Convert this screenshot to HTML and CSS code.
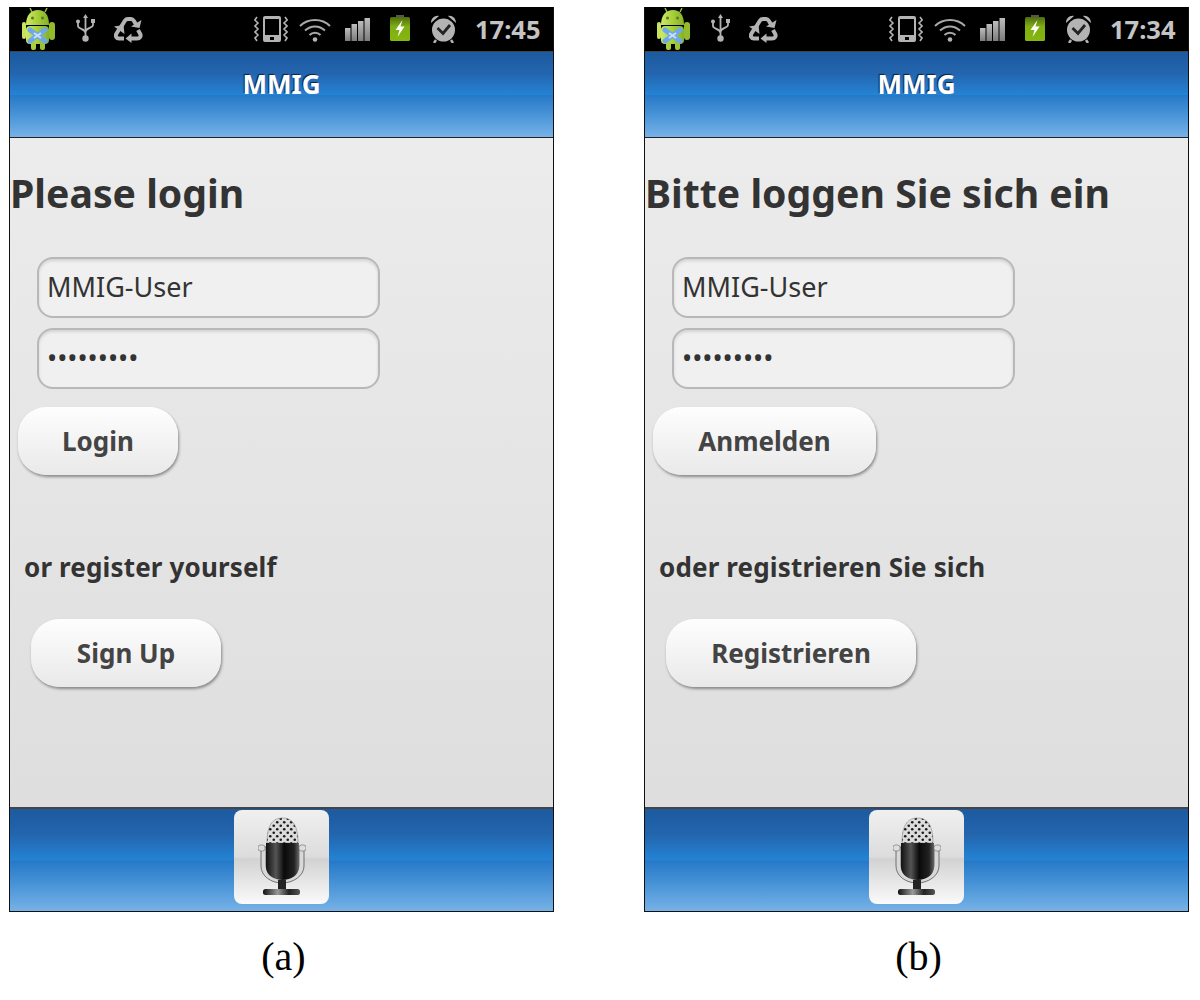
FILE: index.html

```html
<!DOCTYPE html>
<html lang="en">
<head>
<meta charset="UTF-8" />
<title>MMIG Login</title>
<link rel="stylesheet" href="styles.css">
</head>
<body>

<!-- Shared icons -->
<svg class="defs" width="0" height="0">
  <defs>
    <linearGradient id="droidGreen" x1="0" y1="0" x2="1" y2="0">
      <stop offset="0" stop-color="#cfe96a" />
      <stop offset="0.5" stop-color="#a6cf3a" />
      <stop offset="1" stop-color="#86b02a" />
    </linearGradient>
    <linearGradient id="batteryGreen" x1="0" y1="0" x2="0" y2="1">
      <stop offset="0" stop-color="#4e6b10" />
      <stop offset="0.4" stop-color="#7fae12" />
      <stop offset="1" stop-color="#86b60e" />
    </linearGradient>
    <linearGradient id="barGrey" x1="0" y1="0" x2="0" y2="1">
      <stop offset="0" stop-color="#bdbdbd" />
      <stop offset="1" stop-color="#7c7c7c" />
    </linearGradient>
    <linearGradient id="micBody" x1="0" y1="0" x2="1" y2="0">
      <stop offset="0" stop-color="#111" />
      <stop offset="0.3" stop-color="#555" />
      <stop offset="0.55" stop-color="#0a0a0a" />
      <stop offset="0.85" stop-color="#222" />
      <stop offset="1" stop-color="#666" />
    </linearGradient>
    <linearGradient id="micBase" x1="0" y1="0" x2="1" y2="0">
      <stop offset="0" stop-color="#111" />
      <stop offset="0.4" stop-color="#999" />
      <stop offset="0.7" stop-color="#222" />
      <stop offset="1" stop-color="#555" />
    </linearGradient>
    <pattern id="micMesh" width="7" height="7" patternUnits="userSpaceOnUse">
      <rect width="7" height="7" fill="#dcdcdc" />
      <circle cx="1.750" cy="1.750" r="1.300" fill="#1b1b1b" />
      <circle cx="5.250" cy="5.250" r="1.300" fill="#1b1b1b" />
    </pattern>

    <symbol id="i-droid" viewBox="0 0 33 43">
      <path d="M10 5 8 1M23 5l2-4" stroke="#9cc63a" stroke-width="1.400" />
      <path d="M4 18C4 8 9 3 16 3s11 5 11 15z" fill="url(#droidGreen)" />
      <rect x="4" y="19" width="23" height="18" rx="4" fill="url(#droidGreen)" />
      <rect x="0" y="15" width="4" height="17" rx="2" fill="#c6e45e" />
      <rect x="27" y="15" width="6" height="18" rx="3" fill="#93bb2e" />
      <rect x="9" y="35" width="5" height="8" rx="2" fill="#a8d03c" />
      <rect x="18" y="35" width="5" height="8" rx="2" fill="#9ac434" />
      <circle cx="10.500" cy="11" r="1.500" fill="#5c7a1c" />
      <circle cx="20.500" cy="11" r="1.500" fill="#5c7a1c" />
      <path d="M8 23 23 34M23 23 8 34" stroke="#6fa8ea" stroke-width="5" stroke-linecap="round" />
      <path d="M12 26 19 31M19 26 12 31" stroke="#c8e0f8" stroke-width="2" />
    </symbol>

    <symbol id="i-usb" viewBox="0 0 19 28">
      <path d="M9.500 2v22M2 9v3c0 3 7.500 3 7.500 7M17 8v3c0 3-7.500 3-7.500 7" fill="none" stroke="#b3b3b3" stroke-width="1.800" />
      <path d="M9.500 0 12 4H7z" fill="#b3b3b3" />
      <circle cx="2" cy="7.500" r="2" fill="#b3b3b3" />
      <rect x="15" y="5" width="4" height="4" fill="#b3b3b3" />
      <circle cx="9.500" cy="24.500" r="3.200" fill="#b3b3b3" />
    </symbol>

    <symbol id="i-recycle" viewBox="0 0 29 26">
      <path d="M7 10 11 3.500C12 2 13 2 14 2h3c1 0 2 .5 3 2l2 3.500" fill="none" stroke="#b3b3b3" stroke-width="4" />
      <path d="M17 9.500 25.500 11l2-8z" fill="#b3b3b3" />
      <path d="M10 21.500H5C2.500 21.500 1 19 2.500 16.500L5 12.500" fill="none" stroke="#b3b3b3" stroke-width="4" />
      <path d="M0 9.500 9.500 8l1 9z" fill="#b3b3b3" />
      <path d="M15 21.500h8c3 0 4.500-2.500 3-5l-2-3.500" fill="none" stroke="#b3b3b3" stroke-width="4" />
      <path d="M17.500 16.500 11.500 21.500l6 4.500z" fill="#b3b3b3" />
    </symbol>

    <symbol id="i-vibrate" viewBox="0 0 34 26">
      <path d="M3 1 0.800 4 4 7 1 10l3 3-3 3 3 3-3 3 2 3M31 1l2.200 3L30 7l3 3-3 3 3 3-3 3 3 3-2 3" fill="none" stroke="#b3b3b3" stroke-width="1.600" />
      <path fill-rule="evenodd" d="M11 0h14a2 2 0 0 1 2 2v22a2 2 0 0 1-2 2H11a2 2 0 0 1-2-2V2a2 2 0 0 1 2-2zm0 3v16h14V3zm5 18v3h4v-3z" fill="#b3b3b3" />
    </symbol>

    <symbol id="i-wifi" viewBox="0 0 32 25">
      <path d="M1 9c8-8 22-8 30 0M6 13.500c6-5.500 14-5.500 20 0M10.500 18c3-3 8-3 11 0" fill="none" stroke="#a8a8a8" stroke-width="2" />
      <circle cx="16" cy="22.500" r="2.300" fill="#b3b3b3" />
    </symbol>

    <symbol id="i-signal" viewBox="0 0 28 24">
      <rect x="1" y="11" width="5.500" height="13" fill="url(#barGrey)" />
      <rect x="7.500" y="7" width="5.500" height="17" fill="url(#barGrey)" />
      <rect x="14" y="4" width="5.500" height="20" fill="url(#barGrey)" />
      <rect x="20.500" y="1" width="5.500" height="23" fill="url(#barGrey)" />
    </symbol>

    <symbol id="i-battery" viewBox="0 0 20 26">
      <rect x="6" y="0" width="8" height="3" fill="#555" />
      <rect x="0" y="2" width="20" height="24" rx="1.500" fill="url(#batteryGreen)" />
      <path d="M12.500 5 5.500 15H9.500L7.500 22 14.500 11.500H10.500z" fill="#fff" />
    </symbol>

    <symbol id="i-alarm" viewBox="0 0 27 28">
      <path d="M1 8C1 3 5 0 9 1zM26 8c0-5-4-8-8-7z" fill="#b3b3b3" />
      <circle cx="13.500" cy="15" r="11.500" fill="#b3b3b3" />
      <path d="M6 25 4 28M21 25l2 3" stroke="#b3b3b3" stroke-width="2.500" />
      <path d="M7.500 13 13 18.500 20 10" fill="none" stroke="#222" stroke-width="2.800" />
    </symbol>

    <symbol id="i-mic" viewBox="0 0 48 80">
      <path d="M9 26C9 6 16 1 24.500 1S40 6 40 26z" fill="url(#micMesh)" stroke="#888" stroke-width="0.600" />
      <path d="M3 30h5v18c0 8 7 13 16 13s17-5 17-13V30h5v19c0 10-11 17-22 17S3 59 3 49z" fill="#d8d8d8" stroke="#555" stroke-width="0.800" />
      <rect x="0" y="28" width="7" height="6" rx="2.500" fill="#ddd" stroke="#666" stroke-width="0.600" />
      <rect x="41" y="28" width="7" height="6" rx="2.500" fill="#ddd" stroke="#666" stroke-width="0.600" />
      <path d="M8 26h33v24c0 8-8 13-16.500 13S8 58 8 50z" fill="url(#micBody)" />
      <rect x="20" y="63" width="8" height="10" fill="#222" />
      <rect x="5" y="72" width="37" height="6" rx="2.500" fill="url(#micBase)" />
    </symbol>
  </defs>
</svg>

<main class="figures">

  <figure class="shot">
    <div class="phone">
      <div class="status-bar">
        <svg class="ic ic-droid"><use href="#i-droid" /></svg>
        <svg class="ic ic-usb"><use href="#i-usb" /></svg>
        <svg class="ic ic-recycle"><use href="#i-recycle" /></svg>
        <div class="status-right">
          <svg class="ic ic-vibrate"><use href="#i-vibrate" /></svg>
          <svg class="ic ic-wifi"><use href="#i-wifi" /></svg>
          <svg class="ic ic-signal"><use href="#i-signal" /></svg>
          <svg class="ic ic-battery"><use href="#i-battery" /></svg>
          <svg class="ic ic-alarm"><use href="#i-alarm" /></svg>
          <span class="clock">17:45</span>
        </div>
      </div>
      <header class="app-header">MMIG</header>
      <div class="content">
        <h1>Please login</h1>
        <div class="field">MMIG-User</div>
        <div class="field field-pass">•••••••••</div>
        <button class="btn btn-login">Login</button>
        <p class="register">or register yourself</p>
        <button class="btn btn-signup">Sign Up</button>
      </div>
      <footer class="app-footer">
        <div class="mic-tile"><svg class="mic"><use href="#i-mic" /></svg></div>
      </footer>
    </div>
    <figcaption>(a)</figcaption>
  </figure>

  <figure class="shot">
    <div class="phone">
      <div class="status-bar">
        <svg class="ic ic-droid"><use href="#i-droid" /></svg>
        <svg class="ic ic-usb"><use href="#i-usb" /></svg>
        <svg class="ic ic-recycle"><use href="#i-recycle" /></svg>
        <div class="status-right">
          <svg class="ic ic-vibrate"><use href="#i-vibrate" /></svg>
          <svg class="ic ic-wifi"><use href="#i-wifi" /></svg>
          <svg class="ic ic-signal"><use href="#i-signal" /></svg>
          <svg class="ic ic-battery"><use href="#i-battery" /></svg>
          <svg class="ic ic-alarm"><use href="#i-alarm" /></svg>
          <span class="clock">17:34</span>
        </div>
      </div>
      <header class="app-header">MMIG</header>
      <div class="content">
        <h1>Bitte loggen Sie sich ein</h1>
        <div class="field">MMIG-User</div>
        <div class="field field-pass">•••••••••</div>
        <button class="btn btn-login btn-login-de">Anmelden</button>
        <p class="register">oder registrieren Sie sich</p>
        <button class="btn btn-signup btn-signup-de">Registrieren</button>
      </div>
      <footer class="app-footer">
        <div class="mic-tile"><svg class="mic"><use href="#i-mic" /></svg></div>
      </footer>
    </div>
    <figcaption>(b)</figcaption>
  </figure>

</main>

</body>
</html>
```

FILE: styles.css

```css
/* Reset & base */
* {
  box-sizing: border-box;
}
body {
  margin: 0;
  background: #fff;
  font-family: "Noto Sans", "Open Sans", sans-serif;
}
.defs {
  position: absolute;
}
.figures {
  display: flex;
  gap: 90px;
  padding: 7px 0 0 9px;
}
.shot {
  margin: 0;
  width: 545px;
}
figcaption {
  margin-top: 23px;
  padding-left: 4px;
  text-align: center;
  font-family: "Liberation Serif", serif;
  font-size: 40px;
  line-height: 44px;
  color: #000;
}

/* Phone frame */
.phone {
  display: flex;
  flex-direction: column;
  height: 905px;
  border-right: 1px solid #111;
  border-bottom: 1px solid #111;
  border-left: 1px solid #111;
}

/* Status bar */
.status-bar {
  display: flex;
  align-items: flex-start;
  height: 44px;
  flex: none;
  background: #000;
  overflow: hidden;
}
.status-right {
  display: flex;
  align-items: flex-start;
  margin-left: 111px;
}
.ic {
  display: block;
  flex: none;
  filter: blur(0.4px);
}
.ic-droid { width: 33px; height: 43px; margin-left: 12px; }
.ic-usb { width: 19px; height: 28px; margin: 7px 0 0 21px; }
.ic-recycle { width: 29px; height: 26px; margin: 10px 0 0 19px; }
.ic-vibrate { width: 34px; height: 26px; margin-top: 9px; }
.ic-wifi { width: 32px; height: 25px; margin: 10px 0 0 11px; }
.ic-signal { width: 28px; height: 24px; margin: 10px 0 0 13px; }
.ic-battery { width: 20px; height: 26px; margin: 8px 0 0 18px; }
.ic-alarm { width: 27px; height: 28px; margin: 8px 0 0 20px; }
.clock {
  margin-left: 18px;
  color: #c4c4c4;
  font-size: 25.500px;
  font-weight: 700;
  line-height: 44px;
}

/* Blue bars */
.app-header,
.app-footer {
  flex: none;
  background: linear-gradient(180deg, #1d5a9f 0%, #2365ae 25%, #2483d4 50%, #2679c8 51%, #4f98da 78%, #77b2e6 100%);
}
.app-header {
  height: 87px;
  padding-top: 14px;
  border-top: 1px solid #444;
  border-bottom: 1px solid #222;
  text-align: center;
  color: #fff;
  font-size: 26px;
  font-weight: 700;
  line-height: 36px;
  text-shadow: -1px -1px 1px #123;
}
.app-footer {
  display: flex;
  justify-content: center;
  align-items: flex-start;
  height: 104px;
  padding-top: 1px;
  border-top: 2px solid #444;
}
.mic-tile {
  display: flex;
  justify-content: center;
  align-items: center;
  width: 95px;
  height: 94px;
  border-radius: 8px;
  background: linear-gradient(180deg, #f0f0f0 0%, #dcdcdc 50%, #d2d2d2 52%, #fafafa 100%);
}
.mic {
  width: 48px;
  height: 80px;
  filter: blur(0.4px);
}

/* Form content */
.content {
  flex: 1;
  min-height: 0;
  background: linear-gradient(180deg, #ececec 0%, #dedede 100%);
  color: #333;
}
h1 {
  margin: 29px 0 0 0;
  font-size: 39.200px;
  font-weight: 700;
  line-height: 52px;
}
.field {
  width: 343px;
  height: 61px;
  margin: 38px 0 0 27px;
  padding: 0 8px;
  border: 2px solid #b8b8b8;
  border-radius: 16px;
  background: #f0f0f0;
  box-shadow: inset 0 2px 3px rgba(0,0,0,0.12);
  font-size: 27px;
  line-height: 55px;
  color: #333;
}
.field-pass {
  margin-top: 10px;
}
.btn {
  display: block;
  height: 68px;
  padding: 0;
  border: none;
  border-radius: 28px;
  background: linear-gradient(180deg, #fefefe 0%, #e9e9e9 100%);
  box-shadow: 1px 2px 3px rgba(0,0,0,0.4);
  font-family: inherit;
  font-size: 26px;
  font-weight: 700;
  color: #444;
}
.btn-login {
  width: 160px;
  margin: 18px 0 0 8px;
}
.btn-login-de {
  width: 223px;
}
.register {
  margin: 73px 0 0 14px;
  font-size: 26px;
  font-weight: 700;
  line-height: 38px;
  letter-spacing: 0.15px;
}
.btn-signup {
  width: 190px;
  margin: 33px 0 0 21px;
}
.btn-signup-de {
  width: 250px;
}
```
